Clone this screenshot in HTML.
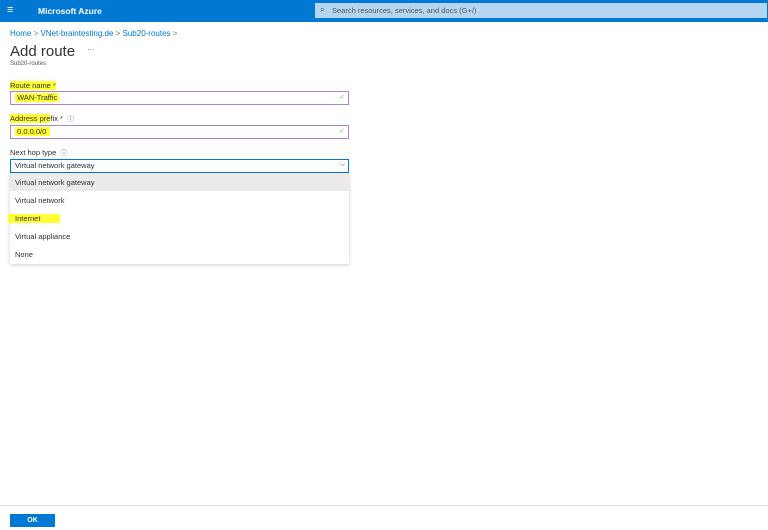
<!DOCTYPE html>
<html><head><style>
*{margin:0;padding:0;box-sizing:border-box}
body{width:768px;height:530px;background:#fff;font-family:"Liberation Sans",sans-serif;position:relative;overflow:hidden;color:#323130}
.hdr{position:absolute;left:0;top:0;width:768px;height:22px;background:#0078d4}
.abs{position:absolute;white-space:nowrap}
.hl{background:#ffff33}
.inp{position:absolute;left:10px;width:339px;height:14px;border:1px solid #b57fd0;font-size:7.5px;padding-left:4px;line-height:12px}
.chk{position:absolute;right:3px;top:0;color:#7fb77f;font-size:7px}
.item{position:absolute;left:10px;width:339px;height:18px;font-size:7.5px;line-height:20px;padding-left:5px;color:#323130}
</style></head><body>
<div class="hdr"></div>
<div class="abs" style="left:7px;top:5px;color:#fff;font-size:11px;line-height:11px">≡</div>
<div class="abs" style="left:38px;top:6px;color:#fff;font-size:8.5px;font-weight:bold">Microsoft Azure</div>
<div class="abs" style="left:315px;top:3px;width:452px;height:15px;background:#b4d6f2"></div>
<div class="abs" style="left:320px;top:5px;font-size:8px;color:#444">⌕</div>
<div class="abs" style="left:332px;top:6px;font-size:7.5px;color:#555">Search resources, services, and docs (G+/)</div>
<div class="abs" style="left:10px;top:29px;font-size:8px;color:#0078d4">Home <span style="color:#777">&gt;</span> VNet-braintesting.de <span style="color:#777">&gt;</span> Sub20-routes <span style="color:#777">&gt;</span></div>
<div class="abs" style="left:10px;top:43px;font-size:15px;color:#323130">Add route</div>
<div class="abs" style="left:87px;top:45px;font-size:8px;color:#555">···</div>
<div class="abs" style="left:10px;top:61px;font-size:6px;color:#555">Sub20-routes</div>
<div class="abs" style="left:10px;top:81px;font-size:7.5px"><span class="hl">Route name <span style="color:#a4262c">*</span></span></div>
<div class="inp" style="top:91px"><span class="hl">&nbsp;WAN-Traffic&nbsp;</span><span class="chk">✓</span></div>
<div class="abs" style="left:10px;top:114px;font-size:7.5px"><span class="hl">Address pre</span>fix <span style="color:#a4262c">*</span> &nbsp;<span style="font-size:7px;color:#666">ⓘ</span></div>
<div class="inp" style="top:125px"><span class="hl">&nbsp;0.0.0.0/0&nbsp;&nbsp;</span><span class="chk">✓</span></div>
<div class="abs" style="left:10px;top:148px;font-size:7.5px">Next hop type &nbsp;<span style="font-size:7px;color:#666">ⓘ</span></div>
<div class="inp" style="top:159px;border-color:#0078d4">Virtual network gateway<span class="chk" style="color:#333;top:-1px">⌵</span></div>
<div class="abs" style="left:10px;top:173px;width:339px;height:91px;box-shadow:0 1px 4px rgba(0,0,0,.2);background:#fff"></div>
<div class="item" style="top:173px;background:#edebe9">Virtual network gateway</div>
<div class="item" style="top:191px">Virtual network</div>
<div class="abs hl" style="left:8px;top:214px;width:52px;height:9px"></div>
<div class="item" style="top:209px">Internet</div>
<div class="item" style="top:227px">Virtual appliance</div>
<div class="item" style="top:245px">None</div>
<div class="abs" style="left:0;top:505px;width:768px;height:1px;background:#e1dfdd"></div>
<div class="abs" style="left:10px;top:514px;width:45px;height:13px;background:#0078d4;color:#fff;font-size:7px;font-weight:bold;text-align:center;line-height:13px">OK</div>
</body></html>
